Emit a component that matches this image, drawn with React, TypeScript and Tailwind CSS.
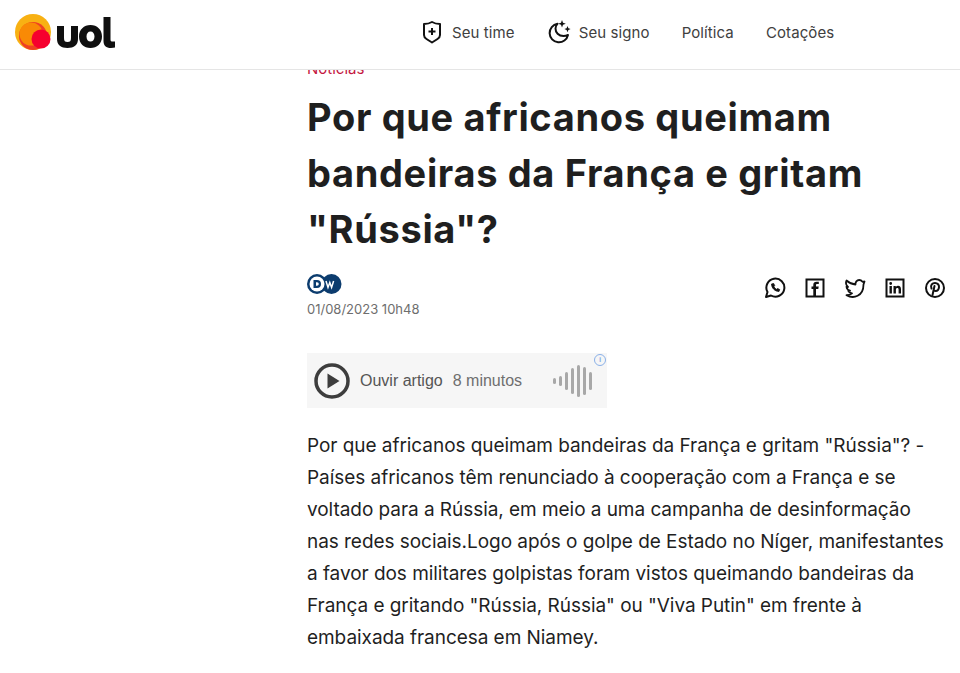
import React from "react";

const body = `Por que africanos queimam bandeiras da França e gritam "Rússia"? -
Países africanos têm renunciado à cooperação com a França e se
voltado para a Rússia, em meio a uma campanha de desinformação
nas redes sociais.Logo após o golpe de Estado no Níger, manifestantes
a favor dos militares golpistas foram vistos queimando bandeiras da
França e gritando "Rússia, Rússia" ou "Viva Putin" em frente à
embaixada francesa em Niamey.`.split("\n");

function Logo() {
  return (
    <div className="flex items-center gap-[6px]">
      <svg width="36" height="36" viewBox="0 0 36 36">
        <circle cx="18" cy="18" r="18" fill="#f8b113" />
        <circle cx="18" cy="22" r="14" fill="#ef4023" />
        <circle cx="16" cy="20" r="11.500" fill="#f98a05" />
        <circle cx="26" cy="25" r="9.500" fill="#f6002e" />
      </svg>
      <svg width="58" height="31" viewBox="0 0 58 31" aria-label="uol">
        <path d="M0 9h7v12c0 3 1 4 3.500 4S14 24 14 21V9h7v13c0 6-4 9-10.500 9S0 28 0 22z" fill="#0f0f0f" />
        <path fillRule="evenodd" d="M33.500 8C40 8 45 12.500 45 19.500S40 31 33.500 31 22 26.500 22 19.500 27 8 33.500 8zm0 6.500c-2.500 0-4 2-4 5s1.500 5 4 5 4-2 4-5-1.500-5-4-5z" fill="#0f0f0f" />
        <path d="M46.500 0h7v22.500c0 1.500.5 2 2 2H58v6c-1 .3-2.500.5-4 .5-5 0-7.500-2.500-7.500-7z" fill="#0f0f0f" />
      </svg>
    </div>
  );
}

function Shield() {
  return (
    <svg width="20" height="24" viewBox="0 0 20 24" fill="none" stroke="#111" strokeWidth="2">
      <path d="M2 4C5 4 8 3.200 10 2c2 1.200 5 2 8 2v11c0 2-1 3-2.500 4L10 22.500 4.500 19C3 18 2 17 2 15z" strokeLinejoin="round" />
      <path d="M10 8v7M6.500 11.500h7" />
    </svg>
  );
}

function MoonStars() {
  return (
    <svg width="24" height="24" viewBox="0 0 24 24" fill="none">
      <path d="M10.500 3.800a9.300 9.300 0 1 0 10.500 11.200c-1.500.7-3 1-4.500 1-5 0-8-3.500-8-7.500 0-1.800.7-3.400 2-4.700z" stroke="#111" strokeWidth="2" strokeLinejoin="round" />
      <path d="M15 0l1 2.800 2.800 1-2.800 1-1 2.800-1-2.800-2.800-1 2.800-1zM20.500 6l.9 2.200 2.200.9-2.200.9-.9 2.200-.9-2.200-2.200-.9 2.200-.9z" fill="#111" />
    </svg>
  );
}

function Nav({ children }: { children: React.ReactNode }) {
  return <span className="text-[15px] tracking-[0.1px] text-[#404040]">{children}</span>;
}

const iconCls = "h-[22px] w-[22px]";

function Social() {
  return (
    <div className="flex items-center gap-[18px] pr-[14px]">
      <svg className={iconCls} viewBox="0 0 22 22" fill="none" stroke="#111" strokeWidth="2">
        <path d="M2 20l1.500-5A9 9 0 1 1 7 18.500z" strokeLinejoin="round" />
        <path d="M7.500 7c0 4 3.500 7.500 7.500 7.500l.7-2-2.200-1-1 .8c-1-.5-2-1.500-2.600-2.600l.8-1-1-2.200z" fill="#111" strokeWidth="0.800" />
      </svg>
      <svg className={iconCls} viewBox="0 0 22 22" fill="none">
        <rect x="2.500" y="2.500" width="17" height="17" stroke="#111" strokeWidth="2" />
        <path d="M12 19v-7h2.300l.4-2.500H12V8.200c0-.8.3-1.200 1.200-1.200h1.600V4.800h-2.200C10.400 4.800 9.300 6 9.300 8v1.500H7.500V12h1.800v7z" fill="#111" />
      </svg>
      <svg className={iconCls} viewBox="0 0 22 22" fill="none" stroke="#111" strokeWidth="1.800" strokeLinejoin="round">
        <path d="M20.500 4.500l-2 .3c-1-1.300-2-1.800-3.300-1.800-2.300 0-4 2-3.700 4.500C8 7.300 5 5.800 2.500 3.500c-1 2.500-.3 5 1.500 6.500l-1.500-.3c.2 2 1.500 3.500 3.500 4l-1.700.2c.6 1.300 1.800 2.300 3.700 2.500-1.500 1.300-3.300 1.800-5.500 1.800 7 4 17 1.200 17-10.700z" />
      </svg>
      <svg className={iconCls} viewBox="0 0 22 22" fill="none">
        <rect x="2.500" y="2.500" width="17" height="17" stroke="#111" strokeWidth="2" />
        <path d="M5.500 9h2.400v7.500H5.500zM5.300 6.500a1.400 1.400 0 1 1 2.800 0 1.400 1.400 0 0 1-2.800 0zM9.500 9h2.300v1c.5-.8 1.300-1.200 2.300-1.200 2 0 2.900 1.200 2.900 3.400v4.300h-2.400v-3.900c0-1.100-.3-1.700-1.200-1.700s-1.500.6-1.500 1.800v3.800H9.500z" fill="#111" />
      </svg>
      <svg className={iconCls} viewBox="0 0 22 22" fill="none" stroke="#111" strokeWidth="2">
        <circle cx="11" cy="11" r="9" />
        <path d="M8.500 18l2-9M7.500 11.500C6 8 8.500 6 11 6c2.700 0 4.200 2 4 4.200-.2 2.300-1.600 3.800-3.400 3.800-1 0-1.700-.6-2-1.300" strokeLinecap="round" />
      </svg>
    </div>
  );
}

function Audio() {
  const bars = [6, 10, 18, 26, 32, 28, 18];
  return (
    <div className="relative flex h-[55px] w-[300px] items-center bg-[#f6f6f6] pl-[7px] font-['Liberation_Sans',sans-serif]">
      <svg width="36" height="36" viewBox="0 0 36 36">
        <circle cx="18" cy="18" r="16" fill="none" stroke="#3d3d3d" strokeWidth="3.500" />
        <path d="M13.500 10.500v15l12-7.500z" fill="#3d3d3d" />
      </svg>
      <span className="ml-[10px] text-[16px] text-[#555]">Ouvir artigo</span>
      <span className="ml-[10px] text-[16px] text-[#6f6f6f]">8 minutos</span>
      <div className="ml-[31px] flex items-center gap-[3px]">
        {bars.map((h, i) => (
          <div key={i} className="w-[3px] rounded-full bg-[#a8a8a8]" style={{ height: h }} />
        ))}
      </div>
      <div className="absolute right-[1px] top-[1px] flex h-[12px] w-[12px] items-center justify-center rounded-full border border-[#8ab0e8] text-[8px] font-bold leading-none text-[#8ab0e8]">i</div>
    </div>
  );
}

export default function App() {
  return (
    <div className="h-[673px] w-[960px] overflow-hidden bg-white font-['Inter',sans-serif]">
      <header className="relative z-10 flex h-[70px] items-center border-b border-[#e5e5e5] bg-white pb-[5px] pl-[15px]">
        <Logo />
        <nav className="ml-[307px] flex items-center">
          <Shield />
          <span className="ml-[10px]"><Nav>Seu time</Nav></span>
          <span className="ml-[32px] flex"><MoonStars /></span>
          <span className="ml-[8px]"><Nav>Seu signo</Nav></span>
          <span className="ml-[32px]"><Nav>Política</Nav></span>
          <span className="ml-[32px]"><Nav>Cotações</Nav></span>
        </nav>
      </header>
      <main className="-mt-[10px] pl-[307px] text-[#1f1f1f]">
        <div className="text-[15px] leading-[18px] text-[#c4173f]">Notícias</div>
        <h1 className="mt-[11px] text-[38px] font-bold leading-[56px] tracking-[0.65px]">Por que africanos queimam<br />bandeiras da França e gritam<br />"Rússia"?</h1>
        <div className="mt-[17px] flex items-start justify-between">
          <div>
            <svg width="35" height="20" viewBox="0 0 35 20">
              <circle cx="24.500" cy="10" r="10" fill="#0c3c6e" />
              <circle cx="10" cy="10" r="10" fill="#0c3c6e" />
              <circle cx="10" cy="10" r="7.500" fill="#fff" />
              <path d="M6.500 6h3.500a4 4 0 0 1 0 8H6.500zM9 8.200v3.600h1a1.800 1.800 0 0 0 0-3.600z" fill="#0c3c6e" fillRule="evenodd" />
              <path d="M19 7l2 6.500 1.800-5 1.800 5 2-6.500" stroke="#fff" strokeWidth="1.500" fill="none" />
            </svg>
            <div className="mt-[6px] text-[13px] leading-[18px] text-[#6e6e6e]">01/08/2023 10h48</div>
          </div>
          <div className="mt-[3px]"><Social /></div>
        </div>
        <div className="mt-[35px]"><Audio /></div>
        <div className="mt-[22px] text-[19px] leading-[32px] tracking-[-0.05px]">
          {body.map((l) => <div key={l} className="whitespace-nowrap">{l}</div>)}
        </div>
      </main>
    </div>
  );
}
